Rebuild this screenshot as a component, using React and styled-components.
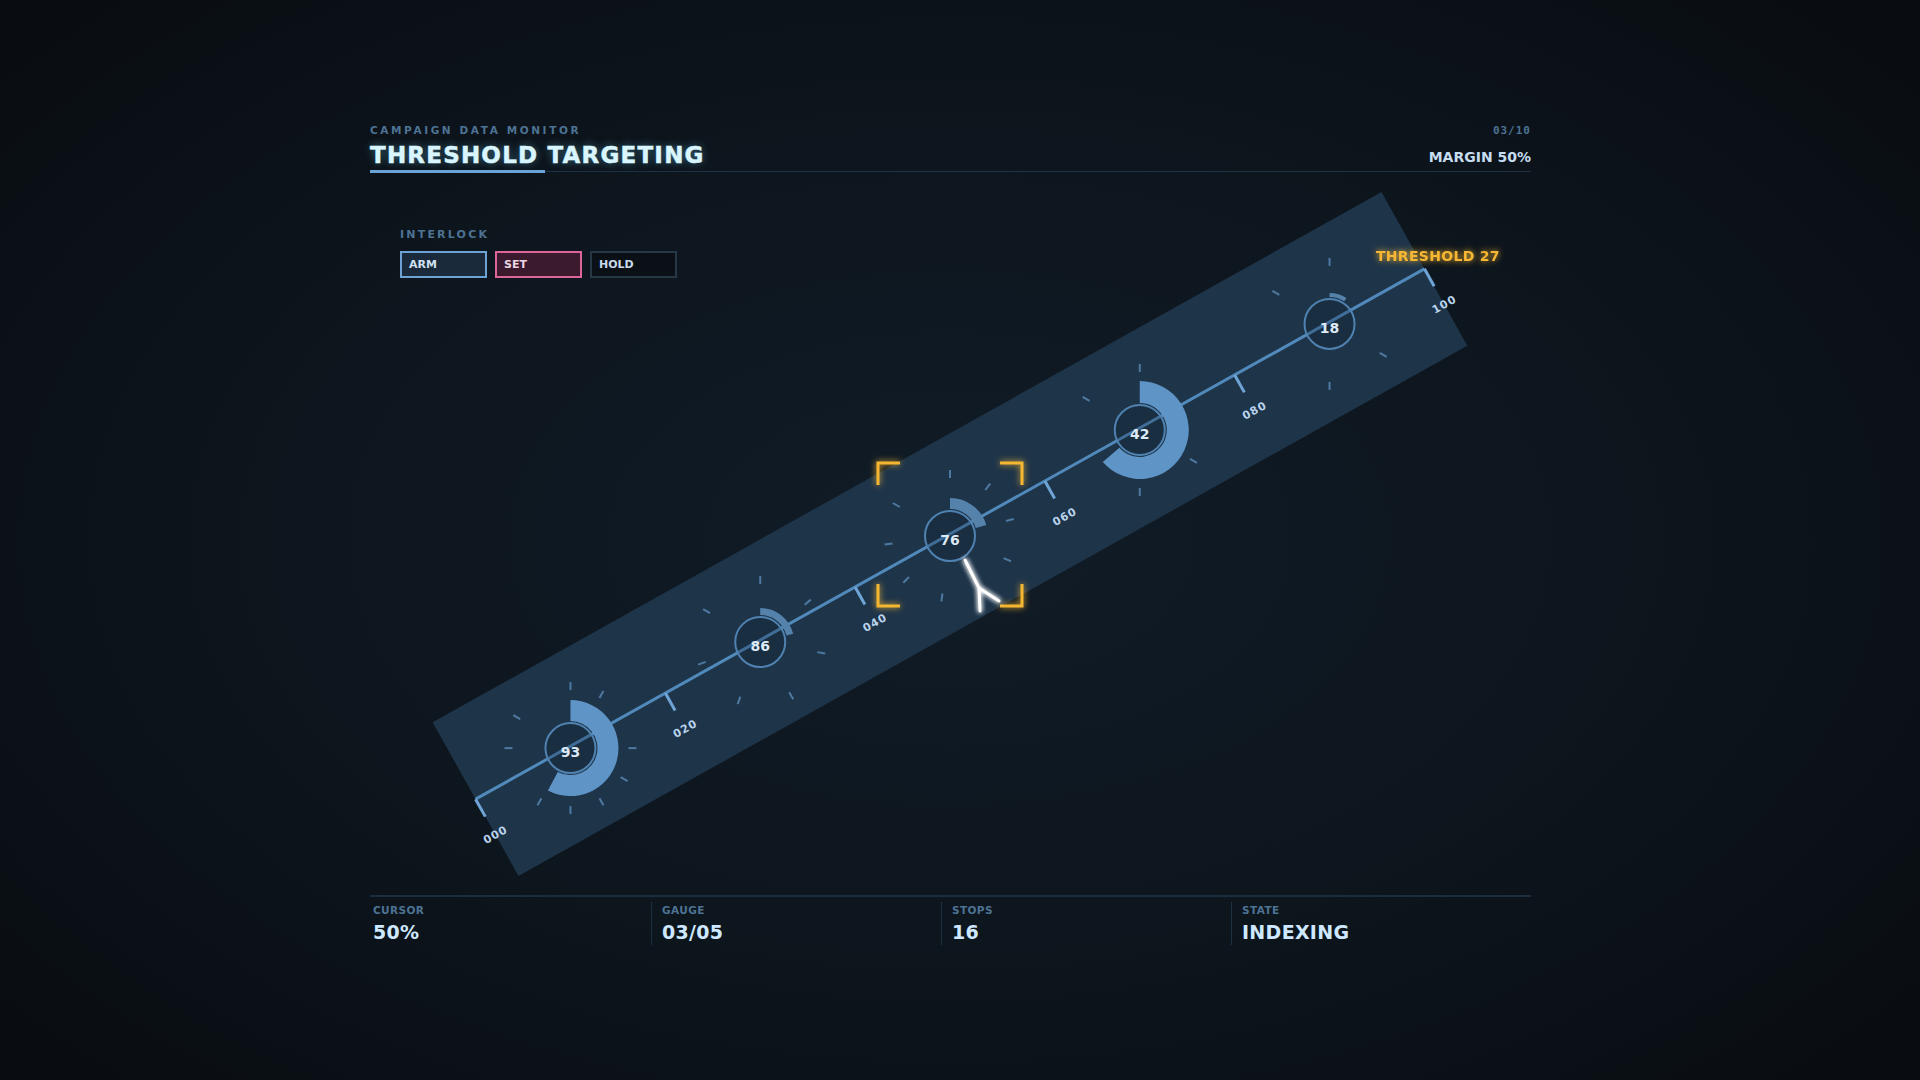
import React from 'react'
import styled, {createGlobalStyle} from 'styled-components'

// band geometry, in stage coordinates (stage starts at 370,173 on the page)
const BAND = {cx: 580, cy: 362, len: 1087, w: 176, angle: -29.2}

const GAUGES = [
    {value: 93, t: 0.1, arc: 208, r1: 27, r2: 48, tone: '#5e95c6', ticks: [0, 30, 90, 120, 150, 180, 210, 270, 300]},
    {value: 86, t: 0.3, arc: 76, r1: 27, r2: 34, tone: '#5482ab', ticks: [0, 50, 100, 150, 200, 250, 300]},
    {value: 76, t: 0.5, arc: 73, r1: 27, r2: 38, tone: '#5482ab', ticks: [0, 37.5, 75, 112.5, 150, 187.5, 225, 262.5, 300]},
    {value: 42, t: 0.7, arc: 229, r1: 27, r2: 49, tone: '#5e95c6', ticks: [0, 120, 180, 300]},
    {value: 18, t: 0.9, arc: 33, r1: 27, r2: 31, tone: '#5482ab', ticks: [0, 120, 180, 300]},
]

const SCALE = [0, 20, 40, 60, 80, 100]

const STATS = [
    {label: 'CURSOR', value: '50%'},
    {label: 'GAUGE', value: '03/05'},
    {label: 'STOPS', value: '16'},
    {label: 'STATE', value: 'INDEXING'},
]

const polar = (r, a) => {
    const rad = a * Math.PI / 180
    return [r * Math.sin(rad), -r * Math.cos(rad)]
}

const arcPath = (r1, r2, a0, a1) => {
    const large = a1 - a0 > 180 ? 1 : 0
    const [x1, y1] = polar(r2, a0)
    const [x2, y2] = polar(r2, a1)
    const [x3, y3] = polar(r1, a1)
    const [x4, y4] = polar(r1, a0)
    return `M${x1} ${y1} A${r2} ${r2} 0 ${large} 1 ${x2} ${y2} L${x3} ${y3} A${r1} ${r1} 0 ${large} 0 ${x4} ${y4} Z`
}

function Gauge({g}) {
    const x = -BAND.len / 2 + g.t * BAND.len
    return (
        <g transform={`translate(${x} 0) rotate(${-BAND.angle}) translate(0 2)`}>
            {g.ticks.map(a => {
                const [ax, ay] = polar(58, a)
                const [bx, by] = polar(66, a)
                return <line key={a} x1={ax} y1={ay} x2={bx} y2={by} stroke="#4e7aa2" strokeWidth="2" />
            })}
            <circle r="25" fill="rgba(14,28,42,0.25)" stroke="#4f82b0" strokeWidth="2" />
            <path d={arcPath(g.r1, g.r2, 0, g.arc)} fill={g.tone} />
            <text
                y="4"
                textAnchor="middle"
                dominantBaseline="central"
                fontSize="14"
                fontWeight="700"
                fill="#dce9f7"
            >
                {g.value}
            </text>
        </g>
    )
}

function Chart() {
    const half = BAND.len / 2
    const b = {x0: 508, y0: 291, x1: 652, y1: 434, a: 22}
    const brackets = `M${b.x0} ${b.y0 + b.a} V${b.y0} H${b.x0 + b.a} M${b.x1 - b.a} ${b.y0} H${b.x1} V${b.y0 + b.a} M${b.x0} ${b.y1 - b.a} V${b.y1} H${b.x0 + b.a} M${b.x1 - b.a} ${b.y1} H${b.x1} V${b.y1 - b.a}`

    return (
        <ChartSvg width="1161" height="723" viewBox="0 0 1161 723">
            <defs>
                <filter id="amberGlow" x="-30%" y="-30%" width="160%" height="160%">
                    <feGaussianBlur stdDeviation="3" result="blur" />
                    <feMerge>
                        <feMergeNode in="blur" />
                        <feMergeNode in="SourceGraphic" />
                    </feMerge>
                </filter>
                <filter id="whiteGlow" x="-60%" y="-60%" width="220%" height="220%">
                    <feGaussianBlur stdDeviation="2.5" result="blur" />
                    <feMerge>
                        <feMergeNode in="blur" />
                        <feMergeNode in="blur" />
                        <feMergeNode in="SourceGraphic" />
                    </feMerge>
                </filter>
            </defs>

            <g transform={`translate(${BAND.cx} ${BAND.cy}) rotate(${BAND.angle})`}>
                <rect x={-half} y={-BAND.w / 2} width={BAND.len} height={BAND.w} fill="#1e3449" />
                <line x1={-half} y1="0" x2={half} y2="0" stroke="#5189bb" strokeWidth="3" />
                {SCALE.map((v, i) => {
                    const x = -half + i * BAND.len / 5
                    return (
                        <g key={v}>
                            <line x1={x} y1="0" x2={x} y2="20" stroke="#6ea5d6" strokeWidth="3" />
                            <text
                                x={x}
                                y="41"
                                textAnchor="middle"
                                dominantBaseline="central"
                                fontSize="11"
                                fontWeight="700"
                                letterSpacing="1"
                                fill="#b9d3ec"
                            >
                                {String(v).padStart(3, '0')}
                            </text>
                        </g>
                    )
                })}
                {GAUGES.map(g => <Gauge key={g.value} g={g} />)}
            </g>

            <path d={brackets} fill="none" stroke="#f5b731" strokeWidth="3" filter="url(#amberGlow)" />

            <path
                d="M595 388 L609 416 L610 439 M609 416 L629 429"
                fill="none"
                stroke="#ffffff"
                strokeWidth="3"
                strokeLinecap="round"
                strokeLinejoin="round"
                filter="url(#whiteGlow)"
            />

            <text
                x="1006"
                y="89"
                fontSize="14"
                fontWeight="700"
                letterSpacing="0.3"
                fill="#f7b733"
                filter="url(#amberGlow)"
            >
                THRESHOLD 27
            </text>
        </ChartSvg>
    )
}

function App() {
    return (
        <>
            <GlobalStyle />
            <Frame>
                <Header>
                    <TitleBlock>
                        <Eyebrow>CAMPAIGN DATA MONITOR</Eyebrow>
                        <Title>THRESHOLD TARGETING</Title>
                    </TitleBlock>
                    <MetaBlock>
                        <Counter>03/10</Counter>
                        <Margin>MARGIN 50%</Margin>
                    </MetaBlock>
                </Header>
                <Rule />

                <Stage>
                    <Chart />
                    <Interlock>
                        <InterlockLabel>INTERLOCK</InterlockLabel>
                        <ButtonRow>
                            <ModeButton $tone="arm">ARM</ModeButton>
                            <ModeButton $tone="set">SET</ModeButton>
                            <ModeButton $tone="hold">HOLD</ModeButton>
                        </ButtonRow>
                    </Interlock>
                </Stage>

                <Footer>
                    {STATS.map(s => (
                        <Stat key={s.label}>
                            <StatLabel>{s.label}</StatLabel>
                            <StatValue>{s.value}</StatValue>
                        </Stat>
                    ))}
                </Footer>
            </Frame>
        </>
    )
}

export default App


const GlobalStyle = createGlobalStyle`
    html, body {
        margin: 0;
        padding: 0;
    }
    body {
        width: 1920px;
        height: 1080px;
        overflow: hidden;
        background: radial-gradient(ellipse 65% 70% at 49.5% 50%, #111c27 0%, #0d151d 55%, #090d12 100%);
        font-family: "DejaVu Sans", "Liberation Sans", sans-serif;
        color: #cfe0f0;
    }
`

const Frame = styled.div`
    width: 1161px;
    margin: 0 0 0 370px;
    padding-top: 124px;
`

const Header = styled.div`
    display: flex;
    justify-content: space-between;
    align-items: flex-start;
    padding-bottom: 2px;
`

const TitleBlock = styled.div`
    display: flex;
    flex-direction: column;
`

const Eyebrow = styled.div`
    font-size: 10.5px;
    line-height: 13px;
    font-weight: 700;
    letter-spacing: 2.6px;
    color: #4d7394;
`

const Title = styled.h1`
    margin: 4px 0 0;
    font-size: 23px;
    line-height: 28px;
    font-weight: 700;
    letter-spacing: 1.2px;
    color: #d9f6ff;
    -webkit-text-stroke: 0.5px #d9f6ff;
    text-shadow: 0 0 8px rgba(120, 215, 255, 0.45);
`

const MetaBlock = styled.div`
    display: flex;
    flex-direction: column;
    align-items: flex-end;
`

const Counter = styled.div`
    font-family: "DejaVu Sans Mono", "Liberation Mono", monospace;
    font-size: 11px;
    line-height: 13px;
    font-weight: 700;
    letter-spacing: 1px;
    color: #4d7394;
`

const Margin = styled.div`
    margin-top: 11px;
    font-size: 14px;
    line-height: 18px;
    font-weight: 700;
    color: #c6dcf0;
`

const Rule = styled.div`
    position: relative;
    height: 1px;
    background: #1d3144;

    &::before {
        content: '';
        position: absolute;
        left: 0;
        top: -1px;
        width: 175px;
        height: 3px;
        background: #6aa3d8;
    }
`

const Stage = styled.div`
    position: relative;
    height: 723px;
    padding: 56px 0 0 30px;
    box-sizing: border-box;
`

const ChartSvg = styled.svg`
    position: absolute;
    top: 0;
    left: 0;
    overflow: visible;
    font-family: "DejaVu Sans", "Liberation Sans", sans-serif;
`

const Interlock = styled.div`
    position: relative;
    display: flex;
    flex-direction: column;
    gap: 10px;
`

const InterlockLabel = styled.div`
    font-size: 11px;
    line-height: 13px;
    font-weight: 700;
    letter-spacing: 2.2px;
    color: #4d7394;
`

const ButtonRow = styled.div`
    display: flex;
    gap: 8px;
`

const tones = {
    arm: {border: '#6da2d4', bg: '#1a2a3a', color: '#cfe0f0'},
    set: {border: '#de6599', bg: '#3a1a2c', color: '#ecd6e4'},
    hold: {border: '#263746', bg: '#0b1016', color: '#c8d9ea'},
}

const ModeButton = styled.div`
    box-sizing: border-box;
    width: 87px;
    height: 27px;
    display: flex;
    align-items: center;
    padding-left: 7px;
    border: 2px solid ${props => tones[props.$tone].border};
    background: ${props => tones[props.$tone].bg};
    color: ${props => tones[props.$tone].color};
    font-size: 11px;
    font-weight: 700;
`

const Footer = styled.div`
    display: grid;
    grid-template-columns: 281px repeat(3, 290px);
    border-top: 2px solid #1a2e3f;
`

const Stat = styled.div`
    display: flex;
    flex-direction: column;
    gap: 4px;
    margin-top: 5px;
    padding: 2px 0 2px 10px;
    border-left: 1px solid #1c3042;

    &:first-child {
        padding-left: 3px;
        border-left: none;
    }
`

const StatLabel = styled.div`
    font-size: 10.5px;
    line-height: 13px;
    font-weight: 700;
    letter-spacing: 0.4px;
    color: #4d7394;
`

const StatValue = styled.div`
    font-size: 19px;
    line-height: 22px;
    font-weight: 700;
    letter-spacing: 0.3px;
    color: #cde8ff;
`
